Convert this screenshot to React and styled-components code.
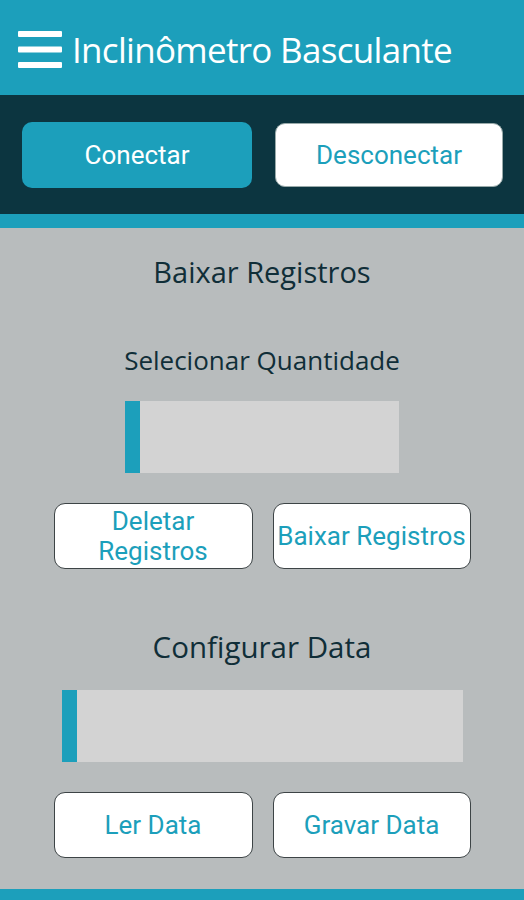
import React from "react";
import styled, { createGlobalStyle } from "styled-components";

const TEAL = "#1c9fbb";
const DARK = "#0c3540";
const GREY = "#b8bcbd";

const Global = createGlobalStyle`
  html, body { margin: 0; padding: 0; background: ${GREY}; }
  body { font-family: "Open Sans", sans-serif; }
  * { box-sizing: border-box; }
`;

const Page = styled.div`
  width: 524px;
  min-height: 900px;
  display: flex;
  flex-direction: column;
  background: ${GREY};
`;

const Header = styled.header`
  height: 95px;
  background: ${TEAL};
  display: flex;
  align-items: center;
  padding: 4px 0 0 18px;
  gap: 10px;
`;

const Title = styled.h1`
  margin: 0;
  font-family: "Open Sans", sans-serif;
  font-weight: 400;
  font-size: 35px;
  line-height: 40px;
  color: #fff;
  letter-spacing: -0.7px;
`;

const ConnectBar = styled.div`
  background: ${DARK};
  height: 133px;
  border-bottom: 14px solid ${TEAL};
  display: grid;
  grid-template-columns: 230px 228px;
  gap: 23px;
  padding: 27px 0 0 22px;
  align-items: start;
`;

const ConnectButton = styled.button`
  height: ${(p) => (p.$primary ? 66 : 64)}px;
  margin-top: ${(p) => (p.$primary ? 0 : 1)}px;
  border-radius: 10px;
  border: ${(p) => (p.$primary ? "none" : "1px solid #9aa")};
  background: ${(p) => (p.$primary ? TEAL : "#fff")};
  color: ${(p) => (p.$primary ? "#fff" : TEAL)};
  font-family: Roboto, sans-serif;
  font-size: 26px;
  padding: 0;
`;

const Main = styled.main`
  flex: 1;
  display: flex;
  flex-direction: column;
  align-items: center;
  padding-top: 26px;
`;

const SectionTitle = styled.h2`
  margin: ${(p) => p.$mt || 0}px 0 0;
  font-family: "Open Sans", sans-serif;
  font-weight: 400;
  color: #102e38;
  font-size: ${(p) => p.$size}px;
  line-height: ${(p) => p.$lh}px;
`;

const Field = styled.div`
  margin-top: 24px;
  width: ${(p) => p.$w}px;
  height: 72px;
  background: #d3d3d3;
  border-left: 15px solid ${TEAL};
`;

const ButtonRow = styled.div`
  margin-top: 30px;
  display: grid;
  grid-template-columns: 199px 198px;
  gap: 20px;
`;

const ActionButton = styled.button`
  height: 66px;
  background: #fff;
  border: 1px solid #3d4446;
  border-radius: 11px;
  color: ${TEAL};
  font-family: Roboto, sans-serif;
  font-size: 26px;
  line-height: 30px;
  padding: 0 2px;
  white-space: ${(p) => (p.$wrap ? "normal" : "nowrap")};
`;

const Footer = styled.div`
  height: 11px;
  background: ${TEAL};
`;

const MenuIcon = () => (
  <svg width="44" height="37" viewBox="0 0 44 37" style={{ display: "block" }}>
    <rect x="0" y="0" width="44" height="6" rx="1" fill="#fff" />
    <rect x="0" y="15.5" width="44" height="6" rx="1" fill="#fff" />
    <rect x="0" y="31" width="44" height="6" rx="1" fill="#fff" />
  </svg>
);

export default function App() {
  return (
    <Page>
      <Global />
      <Header>
        <MenuIcon />
        <Title>Inclinômetro Basculante</Title>
      </Header>
      <ConnectBar>
        <ConnectButton $primary>Conectar</ConnectButton>
        <ConnectButton>Desconectar</ConnectButton>
      </ConnectBar>
      <Main>
        <SectionTitle $size={29} $lh={36}>Baixar Registros</SectionTitle>
        <SectionTitle $size={26} $lh={34} $mt={53}>Selecionar Quantidade</SectionTitle>
        <Field $w={274} />
        <ButtonRow>
          <ActionButton $wrap>Deletar Registros</ActionButton>
          <ActionButton>Baixar Registros</ActionButton>
        </ButtonRow>
        <SectionTitle $size={29.5} $lh={38} $mt={59}>Configurar Data</SectionTitle>
        <Field $w={401} />
        <ButtonRow>
          <ActionButton>Ler Data</ActionButton>
          <ActionButton>Gravar Data</ActionButton>
        </ButtonRow>
      </Main>
      <Footer />
    </Page>
  );
}
